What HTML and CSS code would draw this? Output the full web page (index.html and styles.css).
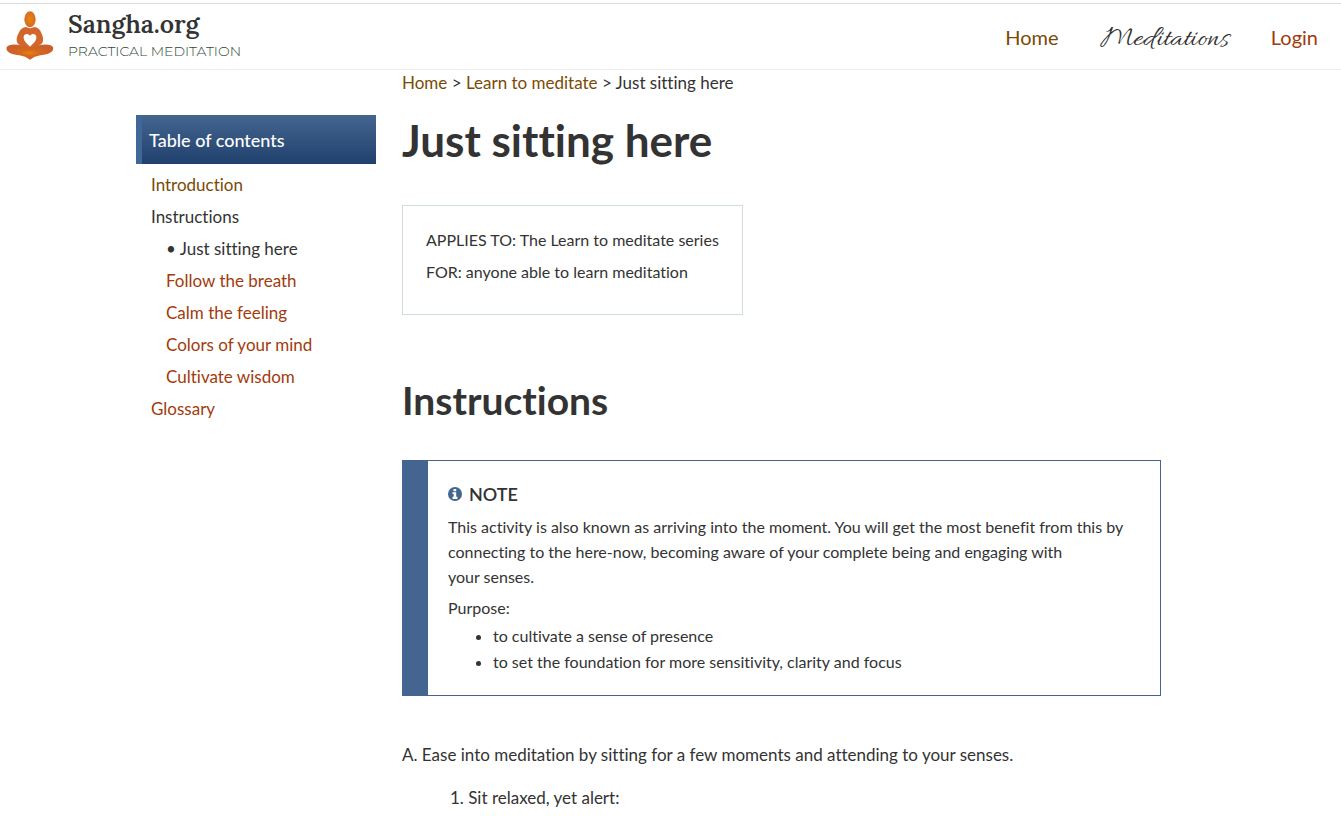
FILE: index.html
```html
<!DOCTYPE html>
<html lang="en">
<head>
<meta charset="utf-8">
<title>Just sitting here - Sangha.org</title>
<link rel="stylesheet" href="styles.css">
</head>
<body>
<header class="site-header">
  <div class="brand">
    <svg class="logo" viewBox="18 18 144 150" aria-hidden="true">
      <defs>
        <radialGradient id="head" cx=".5" cy=".5" r=".6"><stop offset="0" stop-color="#e8860c"/><stop offset="1" stop-color="#d2652a"/></radialGradient>
        <radialGradient id="seat" cx=".5" cy=".55" r=".5"><stop offset="0" stop-color="#e8820f"/><stop offset=".4" stop-color="#d5681f"/><stop offset="1" stop-color="#cb5f2b"/></radialGradient>
      </defs>
      <ellipse cx="90" cy="43" rx="17" ry="24" fill="url(#head)"/>
      <path fill="#d3672b" fill-rule="evenodd" d="M78 66Q90 73 103 66Q118 68 124 84Q132 101 128 112Q121 124 104 127H76Q57 124 51 112Q47 101 56 84Q63 68 78 66ZM90 93C84 83 69 87 71 99C72 110 83 118 90 125C97 118 108 110 109 99C111 87 96 83 90 93Z"/>
      <path fill="url(#seat)" d="M20 127C25 117 48 117 66 122Q80 126 90 125Q100 126 114 122C132 117 155 117 159 127C163 141 143 149 121 151Q103 154 90 164Q77 154 58 151C36 149 16 141 20 127Z"/>
    </svg>
    <div class="brand-text">
      <span class="brand-name">Sangha.org</span>
      <span class="brand-tag">PRACTICAL MEDITATION</span>
    </div>
  </div>
  <nav class="main-nav" aria-label="Main">
    <a class="visited" href="#">Home</a>
    <span class="section-name">Meditations</span>
    <a href="#">Login</a>
  </nav>
</header>
<div class="page">
  <aside class="sidebar">
    <h2 class="toc-title">Table of contents</h2>
    <nav class="toc" aria-label="Table of contents">
      <a class="visited" href="#">Introduction</a>
      <span>Instructions</span>
      <div class="toc-sub">
        <span>• Just sitting here</span>
        <a href="#">Follow the breath</a>
        <a href="#">Calm the feeling</a>
        <a href="#">Colors of your mind</a>
        <a href="#">Cultivate wisdom</a>
      </div>
      <a href="#">Glossary</a>
    </nav>
  </aside>
  <main class="article">
    <nav class="crumbs" aria-label="Breadcrumb"><a class="visited" href="#">Home</a> &gt; <a class="visited" href="#">Learn to meditate</a> &gt; Just sitting here</nav>
    <h1 class="title">Just sitting here</h1>
    <div class="applies">
      <p>APPLIES TO: The Learn to meditate series</p>
      <p>FOR: anyone able to learn meditation</p>
    </div>
    <h2 class="subtitle">Instructions</h2>
    <section class="note">
      <h3 class="note-title">
        <svg class="info" viewBox="0 0 14 14" aria-hidden="true"><circle cx="7" cy="7" r="7" fill="#44658f"/><path fill="#fff" d="M5.500 2h2.700v2.200H5.500zM4.500 5.200h3.700v4.600h1.200V12H4.500V9.800h1.200V7H4.500z"/></svg>
        NOTE
      </h3>
      <p class="note-text">This activity is also known as arriving into the moment. You will get the most benefit from this by connecting to the here-now, becoming aware of your complete being and engaging with your&nbsp;senses.</p>
      <p class="note-purpose">Purpose:</p>
      <ul class="note-list">
        <li>to cultivate a sense of presence</li>
        <li>to set the foundation for more sensitivity, clarity and focus</li>
      </ul>
    </section>
    <div class="steps">
      <p>A. Ease into meditation by sitting for a few moments and attending to your senses.</p>
      <p class="substep">1. Sit relaxed, yet alert:</p>
    </div>
  </main>
</div>
</body>
</html>
```

FILE: styles.css
```css
* { box-sizing: border-box; }
body {
  margin: 0;
  padding-top: 3px;
  background: #fff;
  color: #333;
  font-family: Lato, "Liberation Sans", sans-serif;
  font-size: 16px;
  font-variant-ligatures: none;
  overflow-x: hidden;
}
h1, h2, h3, p, ul { margin: 0; padding: 0; }
a { color: #a23b0c; text-decoration: none; }
a.visited { color: #7a4a05; }

.site-header {
  display: flex;
  justify-content: space-between;
  align-items: center;
  height: 67px;
  padding: 0 23px 2px 6px;
  border-top: 1px solid #dcdcdc;
  border-bottom: 1px solid #ececec;
}
.brand { display: flex; align-items: center; gap: 14px; }
.logo { width: 48px; height: 50px; }
.brand-text { display: flex; flex-direction: column; }
.brand-name {
  font-family: Lora, "Liberation Serif", serif;
  font-size: 25px;
  line-height: 31px;
  font-weight: 600;
}
.brand-tag {
  font-family: Montserrat, Inter, sans-serif;
  font-size: 14px;
  line-height: 22px;
  font-weight: 300;
  color: #2f4a36;
}
.main-nav { display: flex; align-items: baseline; gap: 42px; padding-top: 6px; font-size: 20px; line-height: 32px; }
.section-name {
  font-family: Allura, "Liberation Serif", cursive;
  font-size: 30px;
}

.page {
  display: grid;
  grid-template-columns: 240px minmax(0, 1fr);
  gap: 26px;
  padding: 0 180px 0 136px;
}
.sidebar { padding-top: 45px; }
.toc-title {
  padding: 1px 0 0 7px;
  border-left: 6px solid #3f6797;
  background: linear-gradient(#44658f, #20416d);
  color: #fff;
  font-size: 18px;
  line-height: 48px;
  font-weight: 500;
}
.toc {
  display: flex;
  flex-direction: column;
  padding: 5px 0 0 15px;
  font-size: 17px;
  line-height: 32px;
}
.toc-sub { display: flex; flex-direction: column; padding-left: 15px; }

.crumbs { padding-top: 1px; font-size: 17px; line-height: 24px; }
.title { margin-top: 15px; font-size: 44px; line-height: 60px; font-weight: 700; }
.applies {
  width: fit-content;
  margin-top: 35px;
  padding: 18px 23px 26px;
  border: 1px solid #cfdde2;
  line-height: 32px;
}
.subtitle { margin-top: 59px; font-size: 39px; line-height: 52px; font-weight: 700; }
.note {
  margin-top: 34px;
  padding: 20px 32px 20px 20px;
  border: 1px solid #44658f;
  border-left-width: 26px;
}
.note-title { display: flex; align-items: center; gap: 7px; font-size: 18px; line-height: 26px; font-weight: 600; }
.info { width: 14px; height: 14px; }
.note-text { margin-top: 7px; line-height: 25px; }
.note-purpose { margin-top: 6px; line-height: 25px; }
.note-list { margin-top: 3px; padding-left: 45px; line-height: 26px; }
.steps { display: grid; gap: 17px; margin-top: 46px; font-size: 17px; line-height: 26px; }
.substep { padding-left: 48px; }
```
